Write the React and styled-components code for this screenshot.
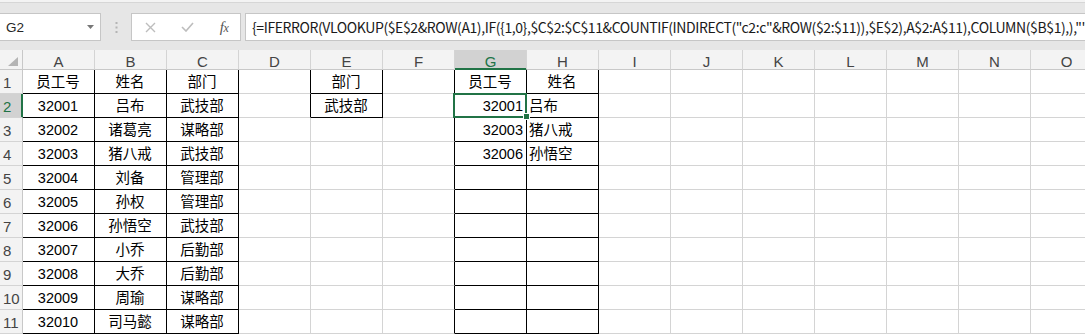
import React from 'react';
import styled, { createGlobalStyle, css } from 'styled-components';

const GREEN = '#217346';
const GRID = '#d4d4d4';
const LINE = '#000000';
const HEAD_BG = '#f3f3f3';
const HEAD_LINE = '#c8c8c8';

const GlobalStyle = createGlobalStyle`
  html, body { margin: 0; padding: 0; background: #ffffff; overflow: hidden; }
  #root { width: 1085px; height: 335px; overflow: hidden; }
`;

const Page = styled.div`
  width: 1085px;
  height: 335px;
  overflow: hidden;
  font-family: "Liberation Sans", "Noto Sans CJK SC", sans-serif;
`;

const TopBar = styled.div`
  height: 50px;
  box-sizing: border-box;
  background: linear-gradient(#f3f3f3 0 2px, #d6d6d6 2px 3px, #e6e6e6 3px);
  display: flex;
  align-items: flex-start;
  padding-top: 13px;
`;

const Field = styled.div`
  height: 28px;
  box-sizing: border-box;
  background: #ffffff;
  border: 1px solid #c6c6c6;
  display: flex;
  align-items: center;
`;

const NameBox = styled(Field)`
  width: 101px;
  border-left: none;
  padding: 0 6px 0 6px;
  justify-content: space-between;
  font-size: 13.5px;
  color: #262626;
`;

const Grip = styled.div`
  width: 30px;
  height: 28px;
  display: flex;
  align-items: center;
  justify-content: center;
`;

const FxGroup = styled(Field)`
  width: 110px;
  display: grid;
  grid-template-columns: 37px 37px 36px;
  align-items: center;
  justify-items: center;
`;

const FxLabel = styled.span`
  font-family: "Liberation Serif", "DejaVu Serif", serif;
  font-style: italic;
  font-size: 15px;
  color: #555555;
  letter-spacing: -0.5px;
  & > small { font-size: 12px; }
`;

const FormulaInput = styled(Field)`
  flex: 1;
  margin-left: 4px;
  border-right: none;
  padding-left: 6px;
  white-space: nowrap;
  overflow: hidden;
  font-family: "Noto Sans CJK SC", sans-serif;
  font-size: 14px;
  letter-spacing: -0.4px;
  color: #1a1a1a;
`;

const Sheet = styled.div`
  display: grid;
  grid-template-columns: 23px repeat(15, 72px);
  grid-template-rows: 20px repeat(11, 24px);
`;

const Corner = styled.div`
  box-sizing: border-box;
  background: ${HEAD_BG};
  border-right: 1px solid ${HEAD_LINE};
  border-bottom: 1px solid ${HEAD_LINE};
  position: relative;
  & > svg { position: absolute; left: 8px; top: 7px; }
`;

const ColHead = styled.div`
  box-sizing: border-box;
  background: ${HEAD_BG};
  border-right: 1px solid ${GRID};
  border-bottom: 1px solid ${HEAD_LINE};
  text-align: center;
  font-size: 15px;
  line-height: 19px;
  padding-top: 2px;
  color: #444444;
  overflow: hidden;
  ${(p) =>
    p.$sel &&
    css`
      background: #d2d2d2;
      color: ${GREEN};
      border-bottom-color: ${GREEN};
      box-shadow: inset 0 -1px ${GREEN};
    `}
`;

const RowHead = styled.div`
  box-sizing: border-box;
  background: ${HEAD_BG};
  border-right: 1px solid ${HEAD_LINE};
  border-bottom: 1px solid ${GRID};
  font-size: 15px;
  line-height: 21px;
  padding-top: 2px;
  padding-left: 3px;
  color: #444444;
  white-space: nowrap;
  ${(p) =>
    p.$sel &&
    css`
      background: #d2d2d2;
      color: ${GREEN};
      border-right-color: ${GREEN};
      box-shadow: inset -1px 0 ${GREEN};
    `}
`;

const Cell = styled.div`
  box-sizing: border-box;
  position: relative;
  border-right: 1px solid ${(p) => (p.$rb ? LINE : GRID)};
  border-bottom: 1px solid ${(p) => (p.$bb ? LINE : GRID)};
  font-size: 14.5px;
  line-height: 21px;
  padding: 2px 3px 0 2px;
  text-align: ${(p) => p.$align};
  white-space: nowrap;
  color: #000000;
`;

const Selection = styled.div`
  position: absolute;
  left: -2px;
  top: -1px;
  width: 74px;
  height: 25px;
  box-sizing: border-box;
  border: 2px solid ${GREEN};
  z-index: 2;
  pointer-events: none;
`;

const FillHandle = styled.div`
  position: absolute;
  left: 68px;
  top: 19px;
  width: 7px;
  height: 7px;
  box-sizing: border-box;
  background: ${GREEN};
  border: 1px solid #ffffff;
  z-index: 3;
`;

const COLS = 'ABCDEFGHIJKLMNO'.split('');
const ROW_COUNT = 11;

const colA = ['32001', '32002', '32003', '32004', '32005', '32006', '32007', '32008', '32009', '32010'];
const colB = ['吕布', '诸葛亮', '猪八戒', '刘备', '孙权', '孙悟空', '小乔', '大乔', '周瑜', '司马懿'];
const colC = ['武技部', '谋略部', '武技部', '管理部', '管理部', '武技部', '后勤部', '后勤部', '谋略部', '谋略部'];

const cells = {};
const put = (r, c, v, align = 'center') => {
  cells[`${r}:${c}`] = { v, align };
};
put(1, 0, '员工号');
put(1, 1, '姓名');
put(1, 2, '部门');
put(1, 4, '部门');
put(1, 6, '员工号');
put(1, 7, '姓名');
colA.forEach((v, i) => put(i + 2, 0, v));
colB.forEach((v, i) => put(i + 2, 1, v));
colC.forEach((v, i) => put(i + 2, 2, v));
put(2, 4, '武技部');
[['32001', '吕布'], ['32003', '猪八戒'], ['32006', '孙悟空']].forEach(([id, name], i) => {
  put(i + 2, 6, id, 'right');
  put(i + 2, 7, name, 'left');
});

const boxes = [
  [1, 11, 0, 2],
  [1, 2, 4, 4],
  [1, 11, 6, 7],
];
const inBox = (r, c) =>
  boxes.some(([r1, r2, c1, c2]) => r >= r1 && r <= r2 && c >= c1 && c <= c2);

const FORMULA =
  '{=IFERROR(VLOOKUP($E$2&ROW(A1),IF({1,0},$C$2:$C$11&COUNTIF(INDIRECT("c2:c"&ROW($2:$11)),$E$2),A$2:A$11),COLUMN($B$1),),"")}';

const SEL_ROW = 2;
const SEL_COL = 6;

export default function App() {
  const body = [];
  for (let r = 1; r <= ROW_COUNT; r++) {
    body.push(
      <RowHead key={`rh${r}`} $sel={r === SEL_ROW}>
        {r}
      </RowHead>
    );
    COLS.forEach((_, c) => {
      const cell = cells[`${r}:${c}`];
      const isSel = r === SEL_ROW && c === SEL_COL;
      body.push(
        <Cell
          key={`${r}:${c}`}
          $rb={inBox(r, c) || inBox(r, c + 1)}
          $bb={inBox(r, c) || inBox(r + 1, c)}
          $align={cell ? cell.align : 'left'}
        >
          {cell ? cell.v : ''}
          {isSel && (
            <>
              <Selection />
              <FillHandle />
            </>
          )}
        </Cell>
      );
    });
  }

  return (
    <Page>
      <GlobalStyle />
      <TopBar>
        <NameBox>
          <span>G2</span>
          <svg width="7" height="4" viewBox="0 0 7 4">
            <path d="M0 0 L7 0 L3.5 4 Z" fill="#777" />
          </svg>
        </NameBox>
        <Grip>
          <svg width="3" height="11" viewBox="0 0 3 11">
            <rect x="0.5" y="0" width="2" height="2" fill="#b4b4b4" />
            <rect x="0.5" y="4.5" width="2" height="2" fill="#b4b4b4" />
            <rect x="0.5" y="9" width="2" height="2" fill="#b4b4b4" />
          </svg>
        </Grip>
        <FxGroup>
          <svg width="11" height="11" viewBox="0 0 11 11">
            <path d="M1 1 L10 10 M10 1 L1 10" stroke="#bdbdbd" strokeWidth="1.4" />
          </svg>
          <svg width="13" height="10" viewBox="0 0 13 10">
            <path d="M1 5 L5 9 L12 1" stroke="#bdbdbd" strokeWidth="1.6" fill="none" />
          </svg>
          <FxLabel>
            f<small>x</small>
          </FxLabel>
        </FxGroup>
        <FormulaInput>{FORMULA}</FormulaInput>
      </TopBar>
      <Sheet>
        <Corner>
          <svg width="10" height="9" viewBox="0 0 10 9">
            <path d="M10 0 L10 9 L0 9 Z" fill="#b4b4b4" />
          </svg>
        </Corner>
        {COLS.map((l, c) => (
          <ColHead key={l} $sel={c === SEL_COL}>
            {l}
          </ColHead>
        ))}
        {body}
      </Sheet>
    </Page>
  );
}
